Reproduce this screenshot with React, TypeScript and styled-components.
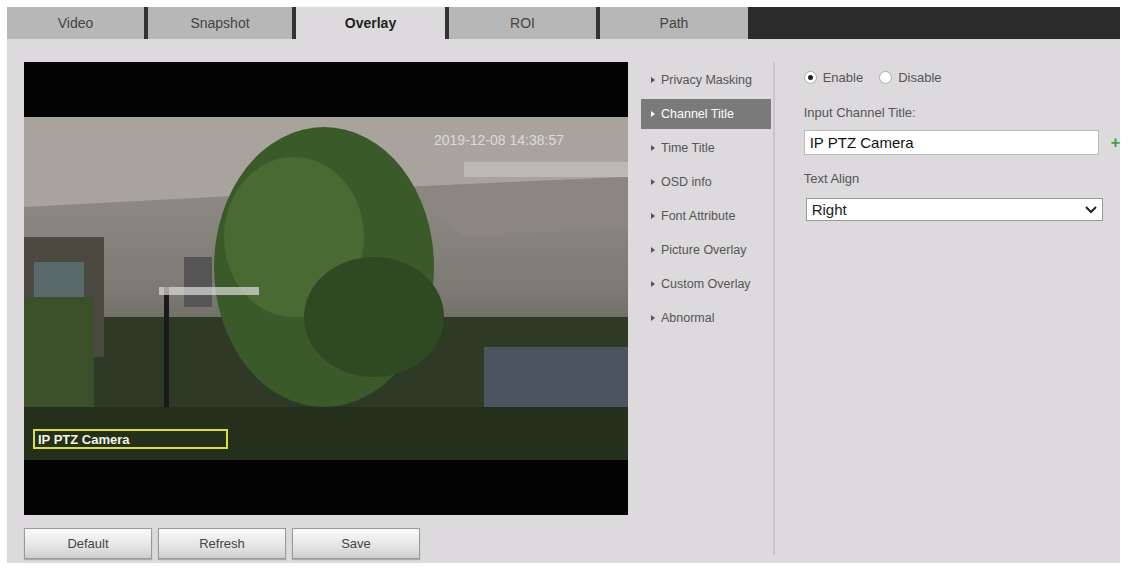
import React from "react";
import styled, { createGlobalStyle } from "styled-components";

const G = createGlobalStyle`
  html,body{margin:0;padding:0;background:#fff;font-family:"Liberation Sans",Arial,sans-serif;}
`;
const Page = styled.div`width:1137px;height:578px;padding:7px 17px 0 7px;box-sizing:border-box;display:flex;flex-direction:column;`;
const Tabs = styled.div`display:flex;height:32px;background:#2b2b2b;`;
const Tab = styled.div<{ $active?: boolean; $w: number }>`
  width:${p => p.$w}px;display:flex;align-items:center;justify-content:center;
  background:${p => p.$active ? "#dcdadc" : "#b7b7b7"};color:${p => p.$active ? "#222" : "#444"};
  font-size:14px;font-weight:${p => p.$active ? 600 : 400};border-right:4px solid #333;box-sizing:border-box;
  &:last-child{border-right:none;}
`;
const Panel = styled.div`flex:none;height:524px;background:#dcdadc;display:flex;padding:23px 0 0 17px;box-sizing:border-box;`;
const Left = styled.div`display:flex;flex-direction:column;width:604px;`;
const Video = styled.div`width:604px;height:453px;background:#030303;display:flex;flex-direction:column;justify-content:center;`;
const Buttons = styled.div`display:flex;gap:6px;margin-top:13px;`;
const Btn = styled.button`width:128px;height:31px;border:1px solid #999;background:linear-gradient(#fafafa,#e4e4e4 60%,#cfcfcf);
  font-family:"Liberation Sans",Arial,sans-serif;font-size:13px;color:#444;box-shadow:0 1px 1px #aaa;`;
const Menu = styled.div`width:134px;margin-left:13px;display:flex;flex-direction:column;padding-top:3px;border-right:2px solid #c9c7c9;height:493px;box-sizing:border-box;`;
const Item = styled.div<{ $active?: boolean }>`height:30px;margin-bottom:4px;display:flex;align-items:center;gap:6px;padding-left:10px;
  font-size:12.5px;color:${p => p.$active ? "#fff" : "#555"};background:${p => p.$active ? "#7a7a7a" : "transparent"};
  margin-right:2px;
  &::before{content:"";border-left:4px solid ${p => p.$active ? "#fff" : "#555"};border-top:3px solid transparent;border-bottom:3px solid transparent;}
`;
const Form = styled.div`padding:4px 0 0 29px;display:flex;flex-direction:column;font-size:13px;color:#555;`;
const Radios = styled.div`display:flex;align-items:center;gap:6px;height:22px;`;
const Radio = styled.span<{ $on?: boolean }>`width:13px;height:13px;border-radius:50%;background:#fff;border:1px solid #aaa;box-sizing:border-box;display:inline-flex;align-items:center;justify-content:center;
  margin-left:${p => p.$on ? 0 : 10}px;&::after{content:"";width:5px;height:5px;border-radius:50%;background:${p => p.$on ? "#222" : "transparent"};}`;
const Label = styled.div<{ $mt: number }>`margin-top:${p => p.$mt}px;`;
const Row = styled.div`display:flex;align-items:center;gap:12px;margin-top:10px;`;
const Input = styled.div`width:295px;height:25px;background:#fff;border:1px solid #bbb;box-sizing:border-box;font-size:15px;color:#111;display:flex;align-items:center;padding-left:5px;`;
const Select = styled.div`width:297px;height:23px;background:#fff;border:1px solid #999;box-sizing:border-box;font-size:15px;color:#222;display:flex;align-items:center;justify-content:space-between;padding:0 5px;margin:12px 0 0 2px;`;
const Plus = styled.span`color:#3aa53a;font-weight:bold;font-size:16px;`;

const Scene = () => (
  <svg width="604" height="343" viewBox="0 0 604 343">
    <defs>
      <linearGradient id="g" x1="0" y1="0" x2="0" y2="1">
        <stop offset="0" stopColor="#9a9590" /><stop offset="0.5" stopColor="#7d7a74" /><stop offset="1" stopColor="#3a3f30" />
      </linearGradient>
    </defs>
    <rect width="604" height="343" fill="url(#g)" />
    <polygon points="0,0 604,0 604,60 380,70 0,90" fill="#a8a39c" />
    <polygon points="380,70 604,60 604,110 440,120" fill="#8b8780" />
    <rect x="440" y="45" width="164" height="15" fill="#c5c2bd" opacity="0.7" />
    <rect x="0" y="200" width="604" height="143" fill="#2f3a26" />
    <rect x="0" y="120" width="80" height="120" fill="#4a4a40" />
    <rect x="10" y="145" width="50" height="55" fill="#5a6a6a" />
    <rect x="160" y="140" width="28" height="50" fill="#555" />
    <ellipse cx="300" cy="150" rx="110" ry="140" fill="#3a5a2a" />
    <ellipse cx="270" cy="120" rx="70" ry="80" fill="#4a6a34" />
    <ellipse cx="350" cy="200" rx="70" ry="60" fill="#2f4a22" />
    <rect x="140" y="170" width="5" height="140" fill="#1a1a1a" />
    <rect x="135" y="170" width="100" height="8" fill="#ddd" opacity="0.7" />
    <rect x="0" y="180" width="70" height="140" fill="#3b4f2b" />
    <rect x="460" y="230" width="144" height="60" fill="#4b5560" />
    <rect x="0" y="290" width="604" height="53" fill="#24301c" />
    <text x="410" y="28" fill="#e8e8e8" fontFamily="Liberation Sans" fontSize="14" opacity="0.8">2019-12-08 14:38:57</text>
    <rect x="10" y="313" width="193" height="18" fill="none" stroke="#d8e040" strokeWidth="2" />
    <text x="14" y="327" fill="#f4f4e0" fontFamily="Liberation Sans" fontSize="13" fontWeight="bold">IP PTZ Camera</text>
  </svg>
);

export default function App() {
  const items = ["Privacy Masking", "Channel Title", "Time Title", "OSD info", "Font Attribute", "Picture Overlay", "Custom Overlay", "Abnormal"];
  const tabs: [string, number][] = [["Video", 141], ["Snapshot", 148], ["Overlay", 153], ["ROI", 151], ["Path", 148]];
  return (
    <Page>
      <G />
      <Tabs>
        {tabs.map(([t, w]) => <Tab key={t} $w={w} $active={t === "Overlay"}>{t}</Tab>)}
      </Tabs>
      <Panel>
        <Left>
          <Video><Scene /></Video>
          <Buttons><Btn>Default</Btn><Btn>Refresh</Btn><Btn>Save</Btn></Buttons>
        </Left>
        <Menu>{items.map(i => <Item key={i} $active={i === "Channel Title"}>{i}</Item>)}</Menu>
        <Form>
          <Radios><Radio $on /> Enable <Radio /> Disable</Radios>
          <Label $mt={17}>Input Channel Title:</Label>
          <Row><Input>IP PTZ Camera</Input><Plus>+</Plus></Row>
          <Label $mt={16}>Text Align</Label>
          <Select>Right<svg width="12" height="8" viewBox="0 0 12 8"><path d="M1 1l5 5 5-5" stroke="#222" strokeWidth="2" fill="none" /></svg></Select>
        </Form>
      </Panel>
    </Page>
  );
}
